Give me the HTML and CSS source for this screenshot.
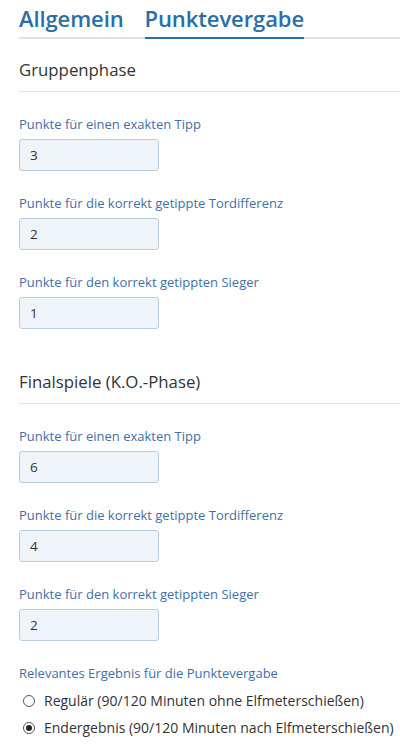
FILE: index.html
```html
<!DOCTYPE html>
<html lang="de">
<head>
<meta charset="utf-8">
<link rel="stylesheet" href="styles.css">
</head>
<body>
<div class="page">
  <nav class="tabs">
    <span class="tab">Allgemein</span>
    <span class="tab active">Punktevergabe</span>
  </nav>

  <h2 class="section">Gruppenphase</h2>
  <div class="field">
    <label class="lbl">Punkte für einen exakten Tipp</label>
    <input class="num" type="text" value="3">
  </div>
  <div class="field">
    <label class="lbl">Punkte für die korrekt getippte Tordifferenz</label>
    <input class="num" type="text" value="2">
  </div>
  <div class="field">
    <label class="lbl">Punkte für den korrekt getippten Sieger</label>
    <input class="num" type="text" value="1">
  </div>

  <h2 class="section second">Finalspiele (K.O.-Phase)</h2>
  <div class="field">
    <label class="lbl">Punkte für einen exakten Tipp</label>
    <input class="num" type="text" value="6">
  </div>
  <div class="field">
    <label class="lbl">Punkte für die korrekt getippte Tordifferenz</label>
    <input class="num" type="text" value="4">
  </div>
  <div class="field">
    <label class="lbl">Punkte für den korrekt getippten Sieger</label>
    <input class="num" type="text" value="2">
  </div>

  <div class="field radios">
    <label class="lbl">Relevantes Ergebnis für die Punktevergabe</label>
    <label class="opt"><span class="radio"></span>Regulär (90/120 Minuten ohne Elfmeterschießen)</label>
    <label class="opt"><span class="radio checked"></span>Endergebnis (90/120 Minuten nach Elfmeterschießen)</label>
  </div>
</div>
</body>
</html>
```

FILE: styles.css
```css
* { box-sizing: border-box; }
html, body { margin: 0; padding: 0; background: #fff; }
body {
  font-family: "Open Sans", "Noto Sans", sans-serif;
  color: #333;
  overflow: hidden;
}
.page {
  padding-left: 19px;
  display: flex;
  flex-direction: column;
}
.tabs {
  display: flex;
  gap: 21px;
  border-bottom: 2px solid #e1e1e1;
  height: 39px;
}
.tab {
  font-size: 22px;
  font-weight: 600;
  color: #2a6ea6;
  line-height: 28px;
  padding-top: 4px;
  letter-spacing: -0.1px;
}
.tab.active {
  border-bottom: 2px solid #2a6ea6;
  margin-bottom: -2px;
}
.section {
  margin: 20px 0 0 0;
  font-size: 16.8px;
  font-weight: 400;
  color: #333;
  line-height: 22px;
  padding-bottom: 10px;
  border-bottom: 1px solid #e1e1e1;
}
.section.second { margin-top: 42px; }
.field {
  display: flex;
  flex-direction: column;
  align-items: flex-start;
  margin-top: 22px;
}
.section + .field { margin-top: 22px; }
.lbl {
  font-size: 13px;
  color: #3f6fa7;
  line-height: 20px;
}
.num {
  margin-top: 5px;
  width: 140px;
  height: 32px;
  border: 1px solid #b9cde1;
  border-radius: 3px;
  background: #eef4f9;
  font-family: inherit;
  font-size: 13.5px;
  color: #333;
  padding: 0 10px;
  outline: none;
}
.radios { gap: 5px; }
.radios .lbl { margin-bottom: 2px; }
.opt {
  display: flex;
  align-items: center;
  font-size: 14px;
  color: #333;
  line-height: 22px;
  padding-left: 4px;
  white-space: nowrap;
}
.radio {
  width: 12px;
  height: 12px;
  border: 1px solid #555;
  border-radius: 50%;
  margin-right: 9px;
  display: inline-flex;
  align-items: center;
  justify-content: center;
  flex: none;
}
.radio.checked::after {
  content: "";
  width: 6px;
  height: 6px;
  border-radius: 50%;
  background: #222;
}
```
